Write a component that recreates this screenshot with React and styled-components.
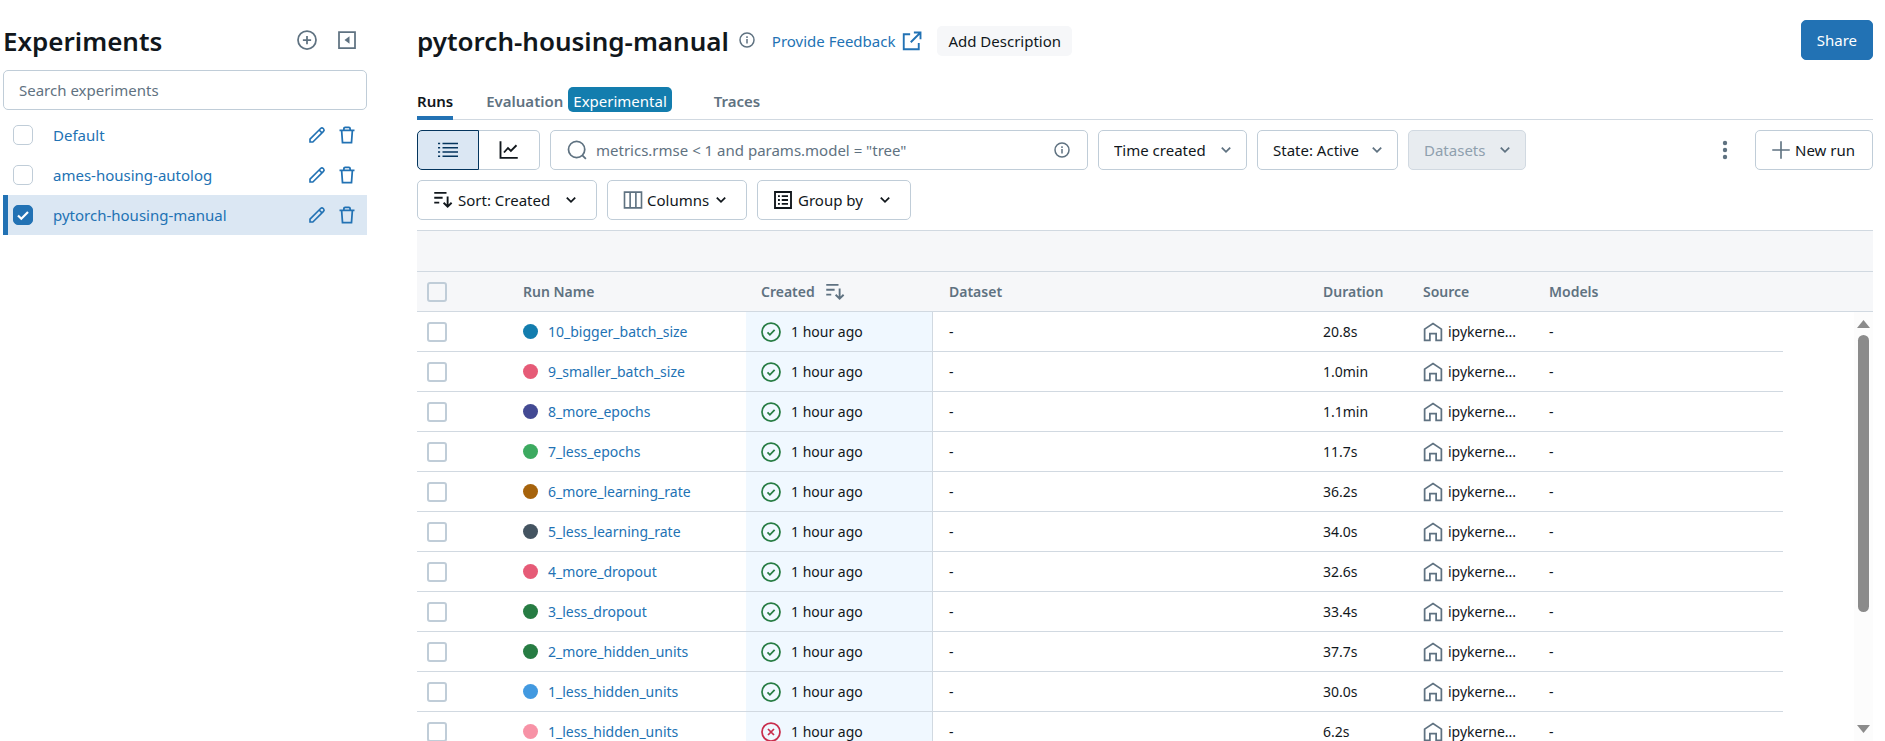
import React from "react";
import styled, { createGlobalStyle, css } from "styled-components";

const c = {
  text: "#11171c",
  muted: "#5f7281",
  link: "#2272b4",
  border: "#c0cdd8",
  line: "#d1d9e1",
  panel: "#f6f7f9",
  selected: "#dbe7f3",
  green: "#277c43",
  red: "#c82d4c",
};

const GlobalStyle = createGlobalStyle`
  *, *::before, *::after { box-sizing: border-box; }
  body {
    margin: 0;
    background: #fff;
    color: ${c.text};
    font: 15px/20px "Noto Sans", "Open Sans", sans-serif;
  }
  button, input, select { font: inherit; color: inherit; margin: 0; }
  button, select { cursor: pointer; }
  svg { display: block; flex: none; }
  h1, h2, ul { margin: 0; padding: 0; }
`;

/* ---------- icons ---------- */

const Svg = ({ size = 20, children, w = 1.5 }) => (
  <svg width={size} height={size} viewBox="0 0 16 16" fill="none" stroke="currentColor" strokeWidth={w} aria-hidden="true">
    {children}
  </svg>
);
const PlusCircleIcon = () => (
  <Svg w={1.4}>
    <circle cx="8" cy="8" r="7.2" />
    <path d="M8 4.7v6.6M4.7 8h6.6" />
  </Svg>
);
const CollapseIcon = () => (
  <Svg w={1.4}>
    <path d="M1.6 1.6h12.8v12.8H1.6z" />
    <path d="M10 5v6L6 8z" fill="currentColor" stroke="none" />
  </Svg>
);
const PencilIcon = () => (
  <Svg w={1.3}>
    <path d="M2.4 11.3 10.9 2.8a1.500 1.500 0 0 1 2.100 0l.2.2a1.500 1.500 0 0 1 0 2.100L4.700 13.600H2.400zM9.700 4l2.300 2.300" />
  </Svg>
);
const TrashIcon = () => (
  <Svg w={1.4}>
    <path d="M2 4.300h12M5.500 4.300V2.900A1 1 0 0 1 6.500 1.900h3a1 1 0 0 1 1 1v1.400M3.700 4.300l.7 9.800h7.200l.7-9.800" />
  </Svg>
);
const InfoIcon = () => (
  <Svg size={16} w={1.5}>
    <circle cx="8" cy="8" r="7" />
    <path d="M8 7v4.500M8 4.200v1.700" />
  </Svg>
);
const NewWindowIcon = () => (
  <Svg w={1.5}>
    <path d="M6.500 2.600H1.400v12h12V9.500M9.500 1.200h5.300v5.300M14.600 1.400 7 9" />
  </Svg>
);
const ListIcon = () => (
  <Svg w={1.3}>
    <path d="M3.600 2.800h12.400M3.600 6.200h12.400M3.600 9.600h12.400M3.600 13h12.400M0 2.800h1.700M0 6.200h1.700M0 9.600h1.700M0 13h1.700" />
  </Svg>
);
const ChartIcon = () => (
  <Svg w={1.5}>
    <path d="M1.200 1v13.300H15M4 10l3.200-3.600 2.300 2.300 4.500-4.500" />
  </Svg>
);
const SearchIcon = () => (
  <Svg w={1.4}>
    <circle cx="7.700" cy="7.600" r="6.500" />
    <path d="m12.100 12.100 3 3" />
  </Svg>
);
const SortIcon = () => (
  <Svg w={1.5}>
    <path d="M1 2.300h9.800M1 6.200h6.700M1 10.100h4M11.700 5.100v8.200M8.500 10.200l3.200 3.200 3.200-3.200" />
  </Svg>
);
const ColumnsIcon = () => (
  <Svg w={1.3}>
    <path d="M1.200 1.700h13.600v12.600H1.200zM5.700 1.700v12.600M10.300 1.700v12.600" />
  </Svg>
);
const GroupIcon = () => (
  <Svg w={1.5}>
    <path d="M1.600 1.600h12.800v12.800H1.600zM7 4.900h5M7 8h5M7 11.100h5M4 4.900h1.500M4 8h1.500M4 11.100h1.500" />
  </Svg>
);
const ChevronIcon = () => (
  <Svg size={16} w={1.800}>
    <path d="m3.800 5.600 4.200 4.200 4.200-4.200" />
  </Svg>
);
const PlusIcon = () => (
  <Svg w={1.300}>
    <path d="M8 1v14M1 8h14" />
  </Svg>
);
const KebabIcon = () => (
  <svg width="20" height="20" viewBox="0 0 20 20" fill="currentColor" aria-hidden="true">
    <circle cx="10" cy="3" r="2.200" />
    <circle cx="10" cy="10" r="2.200" />
    <circle cx="10" cy="17" r="2.200" />
  </svg>
);
const OkIcon = () => (
  <Svg w={1.400}>
    <circle cx="8" cy="8" r="7.200" />
    <path d="m5.200 8.300 1.900 1.900 3.800-3.900" />
  </Svg>
);
const FailIcon = () => (
  <Svg w={1.400}>
    <circle cx="8" cy="8" r="7.200" />
    <path d="m5.600 5.600 4.800 4.800M10.400 5.600l-4.800 4.800" />
  </Svg>
);
const HomeIcon = () => (
  <Svg w={1.400}>
    <path d="M1.300 14.600V5.700L8 1.300l6.700 4.400v8.900h-4.200V9.300h-5v5.300z" />
  </Svg>
);

/* ---------- shell ---------- */

const Page = styled.div`
  display: flex;
  gap: 50px;
  height: 100vh;
  padding: 20px 12px 0 3px;
  overflow: hidden;
`;
const Sidebar = styled.aside`
  flex: 0 0 364px;
`;
const Main = styled.main`
  flex: 1;
  min-width: 0;
  display: flex;
  flex-direction: column;
`;

/* ---------- shared controls ---------- */

const IconButton = styled.button`
  display: grid;
  place-items: center;
  padding: 0;
  border: 0;
  background: none;
  color: ${(p) => (p.$link ? c.link : c.muted)};
`;
const CheckBox = styled.input.attrs({ type: "checkbox" })`
  appearance: none;
  display: block;
  flex: none;
  width: 20px;
  height: 20px;
  border: ${(p) => (p.$thick ? 2 : 1)}px solid ${c.border};
  border-radius: ${(p) => (p.$thick ? 3 : 5)}px;
  background: transparent;
  &:checked {
    border-color: ${c.link};
    background: ${c.link}
      url("data:image/svg+xml,%3Csvg xmlns='http://www.w3.org/2000/svg' viewBox='0 0 18 18' fill='none' stroke='white' stroke-width='2.200'%3E%3Cpath d='m4 9.500 3.300 3.300L14 6'/%3E%3C/svg%3E")
      center / 18px no-repeat;
  }
`;
const box = css`
  height: 40px;
  border: 1px solid ${c.border};
  border-radius: 5px;
  background: #fff;
`;
const Button = styled.button`
  ${box}
  display: flex;
  align-items: center;
  gap: 4px;
  flex: none;
  padding: 0 15px;
  white-space: nowrap;
  width: ${(p) => (p.$width ? `${p.$width}px` : "auto")};
  svg:first-child { color: ${c.muted}; }
`;
const PrimaryButton = styled(Button)`
  margin-left: auto;
  border-color: ${c.link};
  background: ${c.link};
  color: #fff;
`;

const SelectFrame = styled.div`
  display: grid;
  align-items: center;
  flex: none;
  width: ${(p) => p.$width}px;
  > * { grid-area: 1 / 1; }
`;
const SelectInput = styled.select`
  ${box}
  appearance: none;
  width: 100%;
  padding: 0 30px 0 ${(p) => (p.$icon ? 40 : 15)}px;
  &:disabled {
    background: #e8ecf0;
    border-color: ${c.line};
    color: #8fa0ae;
    opacity: 1;
  }
`;
const Lead = styled.span`
  margin-left: 16px;
  pointer-events: none;
`;
const Caret = styled.span`
  justify-self: end;
  margin-right: ${(p) => (p.$inset ? 18 : 13)}px;
  color: ${(p) => (p.$inset ? c.text : c.muted)};
  pointer-events: none;
`;
const Dropdown = ({ label, value, width, icon, disabled }) => (
  <SelectFrame $width={width}>
    <SelectInput aria-label={label} $icon={!!icon} disabled={disabled}>
      <option>{value}</option>
    </SelectInput>
    {icon && <Lead>{icon}</Lead>}
    <Caret $inset={!!icon}><ChevronIcon /></Caret>
  </SelectFrame>
);

/* ---------- sidebar ---------- */

const SideHeader = styled.header`
  display: flex;
  align-items: center;
  gap: 20px;
  height: 40px;
  padding-right: 10px;
`;
const heading = css`
  padding-top: 2px;
  font-size: 26px;
  line-height: 40px;
  font-weight: 600;
`;
const SideTitle = styled.h2`
  ${heading}
  flex: 1;
`;
const SideSearch = styled.input`
  ${box}
  display: block;
  width: 100%;
  margin: 10px 0 5px;
  padding: 0 15px;
  &::placeholder { color: ${c.muted}; opacity: 1; }
`;
const ExperimentList = styled.ul`
  list-style: none;
`;
const ExperimentRow = styled.li`
  display: flex;
  align-items: center;
  gap: 10px;
  height: 40px;
  padding-right: 10px;
  padding-left: 5px;
  border-left: 5px solid ${(p) => (p.$active ? c.link : "transparent")};
  background: ${(p) => (p.$active ? c.selected : "none")};
`;
const Link = styled.a`
  color: ${c.link};
  text-decoration: none;
`;
const ExperimentLink = styled(Link)`
  flex: 1;
  padding-left: 10px;
`;

/* ---------- main header ---------- */

const TitleBar = styled.header`
  display: flex;
  align-items: center;
  height: 40px;
  flex: none;
`;
const Title = styled.h1`
  ${heading}
  margin-right: 10px;
`;
const FeedbackLink = styled(Link)`
  display: flex;
  align-items: center;
  gap: 7px;
  margin: 2px 15px 0 17px;
`;
const SubtleButton = styled.button`
  height: 30px;
  margin-top: 2px;
  padding: 0 11px;
  border: 0;
  border-radius: 5px;
  background: ${c.panel};
`;
const Tabs = styled.nav`
  display: flex;
  flex: none;
  height: 34px;
  margin-top: 26px;
  border-bottom: 1px solid ${c.line};
`;
const Tab = styled.a`
  display: flex;
  gap: 5px;
  height: 34px;
  margin-right: ${(p) => p.$gap || 33}px;
  border-bottom: ${(p) => (p.$active ? 4 : 0)}px solid ${c.link};
  color: ${(p) => (p.$active ? c.text : c.muted)};
  line-height: 30px;
  font-weight: 600;
  text-decoration: none;
`;
const Badge = styled.span`
  height: 25px;
  margin-top: 1px;
  padding: 0 5px;
  border-radius: 5px;
  background: #137dae;
  color: #fff;
  line-height: 28px;
  font-weight: 400;
`;

/* ---------- toolbar ---------- */

const Toolbar = styled.div`
  display: flex;
  align-items: center;
  flex: none;
  gap: 10px;
  margin-top: 10px;
`;
const Segments = styled.div`
  display: flex;
  flex: none;
`;
const Segment = styled.button`
  ${box}
  display: grid;
  place-items: center;
  width: 61px;
  padding: 0;
  border-radius: 0 5px 5px 0;
  border-left: 0;
  ${(p) => p.$on && css`
    width: 62px;
    border: 1px solid #04355d;
    border-radius: 5px 0 0 5px;
    background: ${c.selected};
    color: #04355d;
  `}
`;
const SearchBox = styled.div`
  ${box}
  display: flex;
  align-items: center;
  flex: 0 1 538px;
  min-width: 200px;
  gap: 9px;
  padding: 0 17px 0 16px;
  color: ${c.muted};
`;
const SearchInput = styled.input`
  flex: 1;
  min-width: 0;
  padding: 0;
  border: 0;
  outline: 0;
  background: none;
  &::placeholder { color: ${c.muted}; opacity: 1; }
`;
const ToolbarEnd = styled.div`
  display: flex;
  gap: 20px;
  margin-left: auto;
`;

/* ---------- table ---------- */

const TableArea = styled.section`
  position: relative;
  flex: 1;
  min-height: 0;
  margin-top: 10px;
  overflow: hidden;
`;
const Table = styled.table`
  width: 100%;
  table-layout: fixed;
  border-collapse: separate;
  border-spacing: 0;
`;
const Col = styled.col`
  width: ${(p) => (p.$w ? `${p.$w}px` : "auto")};
`;
const GroupHead = styled.td`
  height: 42px;
  padding: 0;
  border-top: 1px solid ${c.line};
  border-bottom: 1px solid ${c.line};
  background: ${c.panel};
`;
const Head = styled.th`
  height: 40px;
  padding: 0 0 0 ${(p) => p.$pad || 16}px;
  border-bottom: 1px solid ${c.line};
  background: ${c.panel};
  color: ${c.muted};
  font-size: 14px;
  font-weight: 600;
  text-align: left;
`;
const Cell = styled.td`
  height: 40px;
  padding: 0 0 0 ${(p) => p.$pad || 16}px;
  border-bottom: 1px solid ${c.line};
  white-space: nowrap;
  font-size: 14px;
  ${(p) => p.$sorted && css`
    border-right: 1px solid ${c.line};
    background: #f0f8ff;
  `}
`;
const EndCell = styled.td`
  padding: 0;
`;
const Inline = styled.div`
  display: flex;
  align-items: center;
  gap: ${(p) => p.$gap || 10}px;
`;
const Status = styled.span`
  color: ${(p) => (p.$failed ? c.red : c.green)};
`;
const Dot = styled.span`
  width: 15px;
  height: 15px;
  border-radius: 50%;
  background: ${(p) => p.$color};
`;
const Muted = styled.span`
  color: ${c.muted};
`;
const Scrollbar = styled.div`
  position: absolute;
  top: 82px;
  right: 0;
  bottom: 0;
  width: 19px;
  padding: 8px 0;
  display: flex;
  flex-direction: column;
  align-items: center;
  background: #fcfcfc;
  color: #8b8b8b;
`;
const Thumb = styled.div`
  width: 11px;
  height: 67%;
  margin: 7px 0 auto;
  border-radius: 6px;
  background: currentColor;
`;

const runs = [
  ["10_bigger_batch_size", "#137dae", "20.8s"],
  ["9_smaller_batch_size", "#e65b77", "1.0min"],
  ["8_more_epochs", "#434a93", "1.1min"],
  ["7_less_epochs", "#3caa60", "11.7s"],
  ["6_more_learning_rate", "#a6630c", "36.2s"],
  ["5_less_learning_rate", "#445461", "34.0s"],
  ["4_more_dropout", "#e65b77", "32.6s"],
  ["3_less_dropout", "#277c43", "33.4s"],
  ["2_more_hidden_units", "#277c43", "37.7s"],
  ["1_less_hidden_units", "#4299e0", "30.0s"],
  ["1_less_hidden_units", "#f792a6", "6.2s", true],
];

const experiments = ["Default", "ames-housing-autolog", "pytorch-housing-manual"];

export default function App() {
  return (
    <Page>
      <GlobalStyle />
      <Sidebar>
        <SideHeader>
          <SideTitle>Experiments</SideTitle>
          <IconButton aria-label="Create experiment"><PlusCircleIcon /></IconButton>
          <IconButton aria-label="Collapse sidebar"><CollapseIcon /></IconButton>
        </SideHeader>
        <SideSearch placeholder="Search experiments" aria-label="Search experiments" />
        <ExperimentList>
          {experiments.map((name, i) => (
            <ExperimentRow key={name} $active={i === 2}>
              <CheckBox defaultChecked={i === 2} aria-label={name} />
              <ExperimentLink href="#">{name}</ExperimentLink>
              <IconButton $link aria-label={`Rename ${name}`}><PencilIcon /></IconButton>
              <IconButton $link aria-label={`Delete ${name}`}><TrashIcon /></IconButton>
            </ExperimentRow>
          ))}
        </ExperimentList>
      </Sidebar>

      <Main>
        <TitleBar>
          <Title>pytorch-housing-manual</Title>
          <IconButton aria-label="Experiment info"><InfoIcon /></IconButton>
          <FeedbackLink href="#">Provide Feedback<NewWindowIcon /></FeedbackLink>
          <SubtleButton>Add Description</SubtleButton>
          <PrimaryButton>Share</PrimaryButton>
        </TitleBar>

        <Tabs>
          <Tab href="#" $active>Runs</Tab>
          <Tab href="#" $gap={42}>Evaluation<Badge>Experimental</Badge></Tab>
          <Tab href="#">Traces</Tab>
        </Tabs>

        <Toolbar>
          <Segments>
            <Segment $on aria-label="List view"><ListIcon /></Segment>
            <Segment aria-label="Chart view"><ChartIcon /></Segment>
          </Segments>
          <SearchBox>
            <SearchIcon />
            <SearchInput aria-label="Search runs" placeholder={'metrics.rmse < 1 and params.model = "tree"'} />
            <IconButton aria-label="Search help"><InfoIcon /></IconButton>
          </SearchBox>
          <Dropdown label="Time" value="Time created" width={149} />
          <Dropdown label="State" value="State: Active" width={141} />
          <Dropdown label="Datasets" value="Datasets" width={118} disabled />
          <ToolbarEnd>
            <IconButton aria-label="More options"><KebabIcon /></IconButton>
            <Button $width={118}><PlusIcon />New run</Button>
          </ToolbarEnd>
        </Toolbar>

        <Toolbar>
          <Dropdown label="Sort" value="Sort: Created" width={180} icon={<SortIcon />} />
          <Button $width={140} aria-haspopup="menu"><ColumnsIcon />Columns<ChevronIcon /></Button>
          <Dropdown label="Group by" value="Group by" width={154} icon={<GroupIcon />} />
        </Toolbar>

        <TableArea>
          <Table>
            <colgroup>
              <Col $w={90} />
              <Col $w={239} />
              <Col $w={187} />
              <Col />
              <Col $w={100} />
              <Col $w={126} />
              <Col $w={250} />
              <Col $w={90} />
            </colgroup>
            <thead>
              <tr><GroupHead colSpan={8} /></tr>
              <tr>
                <Head $pad={10}><CheckBox $thick aria-label="Select all runs" /></Head>
                <Head>Run Name</Head>
                <Head $pad={15}><Inline>Created<SortIcon /></Inline></Head>
                <Head>Dataset</Head>
                <Head>Duration</Head>
                <Head>Source</Head>
                <Head>Models</Head>
                <Head />
              </tr>
            </thead>
            <tbody>
              {runs.map(([name, color, duration, failed], i) => (
                <tr key={i}>
                  <Cell $pad={10}><CheckBox $thick aria-label={`Select ${name}`} /></Cell>
                  <Cell><Inline><Dot $color={color} /><Link href="#">{name}</Link></Inline></Cell>
                  <Cell $sorted $pad={15}>
                    <Inline>
                      <Status $failed={failed}>{failed ? <FailIcon /> : <OkIcon />}</Status>
                      1 hour ago
                    </Inline>
                  </Cell>
                  <Cell>-</Cell>
                  <Cell>{duration}</Cell>
                  <Cell><Inline $gap={5}><Muted><HomeIcon /></Muted>ipykerne...</Inline></Cell>
                  <Cell>-</Cell>
                  <EndCell />
                </tr>
              ))}
            </tbody>
          </Table>
          <Scrollbar aria-hidden="true">
            <svg width="13" height="8" viewBox="0 0 13 8" fill="currentColor"><path d="M6.500 0 13 8H0z" /></svg>
            <Thumb />
            <svg width="13" height="8" viewBox="0 0 13 8" fill="currentColor"><path d="M6.500 8 13 0H0z" /></svg>
          </Scrollbar>
        </TableArea>
      </Main>
    </Page>
  );
}
